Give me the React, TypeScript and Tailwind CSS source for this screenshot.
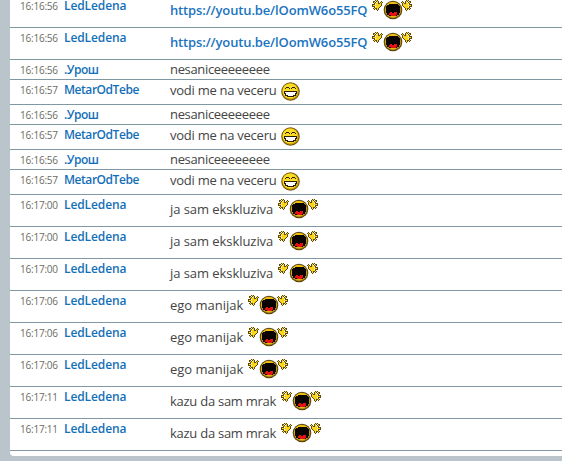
import React from "react";

const palette: Record<string, string> = {
  k: "#5f490c",
  b: "#a87f10",
  y: "#f8d51c",
};

// Open hand, one character per pixel
const hand = [
  "....k......",
  "...kyk.....",
  ".kk.kyk..k.",
  ".kyk.yk.kyk",
  "..kyyykkyk.",
  "kkk.yyyyyk.",
  "kyyyyyyyyk.",
  "kkk.yyyyk..",
  "..kyyyyk...",
  ".kykkyk....",
  "..k.kyk....",
  ".....k.....",
];

function Hand() {
  return (
    <>
      {hand.flatMap((row, y) =>
        row.split("").map((c, x) =>
          c === "." ? null : <rect key={`${x}-${y}`} x={x} y={y} width="1" height="1" fill={palette[c]} />
        )
      )}
    </>
  );
}

function Scream() {
  return (
    <svg width="40" height="20" viewBox="0 0 40 20" className="block shrink-0" shapeRendering="crispEdges">
      <g shapeRendering="auto">
        <circle cx="21" cy="10" r="9.3" fill="#57430c" />
        <circle cx="21" cy="10" r="8.3" fill="#b98c10" />
        <circle cx="20.8" cy="9.4" r="7.5" fill="#ecc418" />
      </g>
      <path d="M17 4h9v1h1v1h1v7h-1v2h-2v1h-8v-1h-2v-2h-1V6h1V5h1z" fill="#0a0502" />
      <path d="M18 12h2v1h2v-1h3v3h-1v1h-5v-1h-2v-2h1z" fill="#e51313" />
      <g transform="translate(0 -1)">
        <Hand />
      </g>
      <g transform="translate(40 -1) scale(-1 1)">
        <Hand />
      </g>
    </svg>
  );
}

function Grin() {
  return (
    <svg width="19" height="19" viewBox="0 0 19 19" className="block shrink-0">
      <circle cx="9.5" cy="9.5" r="9.3" fill="#6f560d" />
      <circle cx="9.5" cy="9.5" r="8.3" fill="#cd9b0c" />
      <circle cx="9.1" cy="8.9" r="7.5" fill="#fadc20" />
      <g shapeRendering="crispEdges">
        <path d="M5 5h3v1H5zM4 6h1v1H4zM8 6h1v1H8zM11 5h3v1h-3zM10 6h1v1h-1zM14 6h1v1h-1z" fill="#2a1d04" />
        <path d="M3 9h13v3h-1v2h-2v1H6v-1H4v-2H3z" fill="#2a1d04" />
        <path d="M4 10h11v1h-1v2h-2v1H7v-1H5v-2H4z" fill="#fff" />
      </g>
    </svg>
  );
}

type Kind = "scream" | "grin" | "plain";
type Message = { time: string; name: string; text: string; kind: Kind; link?: boolean };

const link = { name: "LedLedena", text: "https://youtu.be/lOomW6o55FQ", kind: "scream" as Kind, link: true };
const uros: Message = { time: "16:16:56", name: ".Урош", text: "nesaniceeeeeeee", kind: "plain" };
const metar: Message = { time: "16:16:57", name: "MetarOdTebe", text: "vodi me na veceru", kind: "grin" };
const led = (time: string, text: string): Message => ({ time, name: "LedLedena", text, kind: "scream" });

const messages: Message[] = [
  { time: "16:16:56", ...link },
  { time: "16:16:56", ...link },
  uros, metar, uros, metar, uros, metar,
  led("16:17:00", "ja sam ekskluziva"),
  led("16:17:00", "ja sam ekskluziva"),
  led("16:17:00", "ja sam ekskluziva"),
  led("16:17:06", "ego manijak"),
  led("16:17:06", "ego manijak"),
  led("16:17:06", "ego manijak"),
  led("16:17:11", "kazu da sam mrak"),
  led("16:17:11", "kazu da sam mrak"),
];

const rowHeight: Record<Kind, string> = { scream: "h-8", grin: "h-[25px]", plain: "h-5" };
const textTop: Record<Kind, string> = { scream: "pt-[5px]", grin: "pt-px", plain: "pt-0" };

const textStyle: Record<string, string> = {
  "https://youtu.be/lOomW6o55FQ": "w-[202px] tracking-[-0.14px] font-semibold",
  nesaniceeeeeeee: "w-[104px] tracking-[-0.33px]",
  "vodi me na veceru": "w-[111px] tracking-[-0.26px]",
  "ja sam ekskluziva": "w-[108px] tracking-[-0.06px]",
  "ego manijak": "w-[78px] tracking-[0px]",
  "kazu da sam mrak": "w-[111px] tracking-[-0.26px]",
};

const nameStyle: Record<string, string> = {
  LedLedena: "tracking-[-0.1px]",
  MetarOdTebe: "tracking-[-0.45px]",
  ".Урош": "tracking-[-0.5px]",
};

function Row({ m }: { m: Message }) {
  return (
    <li className={`flex items-start border-b border-[#7f98a3] pl-2.5 whitespace-nowrap ${rowHeight[m.kind]}`}>
      <span className="w-[44px] shrink-0 pt-0.5 text-[10px] leading-4 tracking-[-0.22px] text-[#6b6b62]">{m.time}</span>
      <span className={`w-[106px] shrink-0 pt-[3px] text-[12px] leading-[14px] font-semibold text-[#146fb8] ${nameStyle[m.name]}`}>
        {m.name}
      </span>
      <span
        className={`shrink-0 text-[13px] leading-[18px] ${textTop[m.kind]} ${textStyle[m.text]} ${
          m.link ? "text-[#1a74c0]" : "text-[#444]"
        }`}
      >
        {m.text}
      </span>
      {m.kind === "scream" && <span className="pt-1"><Scream /></span>}
      {m.kind === "grin" && <span className="pt-0.5"><Grin /></span>}
    </li>
  );
}

export default function App() {
  return (
    <div className="h-[461px] w-[562px] overflow-hidden bg-[#b9c5cb] pl-2.5 font-['Open_Sans','Noto_Sans',sans-serif]">
      <ul className="-mt-1 h-[460px] rounded-bl-[4px] bg-white">
        {messages.map((m, i) => (
          <Row key={i} m={m} />
        ))}
      </ul>
    </div>
  );
}
